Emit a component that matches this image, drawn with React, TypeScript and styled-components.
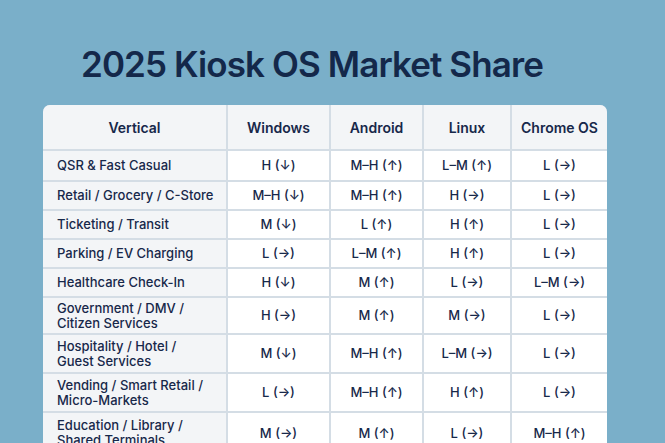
import React from "react";
import styled, { createGlobalStyle } from "styled-components";

const Global = createGlobalStyle`
  html, body { margin: 0; padding: 0; }
  body {
    background: #7aafc9;
    font-family: Inter, "Noto Sans", "Liberation Sans", sans-serif;
    width: 665px;
    height: 443px;
    overflow: hidden;
  }
`;

const Page = styled.div`
  display: flex;
  flex-direction: column;
  padding: 44px 0 0 43px;
`;

const Title = styled.h1`
  margin: 0 0 20px 38px;
  font-size: 35px;
  line-height: 41px;
  font-weight: 600;
  color: #14284a;
  letter-spacing: -0.9px;
`;

const Grid = styled.div`
  display: grid;
  width: 564px;
  grid-template-columns: 183px 101px 91px 86px 95px;
  grid-template-rows: 44px 29px 27px 27px 27px 27px 35px 37px 37px 40px;
  gap: 2px;
  background: #d4dde5;
  border-radius: 7px 7px 0 0;
  overflow: hidden;
`;

const Cell = styled.div<{ $head?: boolean; $label?: boolean }>`
  display: flex;
  align-items: center;
  justify-content: ${(p) => (p.$label && !p.$head ? "flex-start" : "center")};
  padding: ${(p) => (p.$label && !p.$head ? "0 0 0 14px" : "0")};
  background: ${(p) => (p.$head || p.$label ? "#f3f5f7" : "#ffffff")};
  color: #17284a;
  font-size: ${(p) => (p.$head ? "14px" : "13px")};
  font-weight: ${(p) => (p.$head ? 600 : 500)};
  line-height: 15px;
  text-align: ${(p) => (p.$label && !p.$head ? "left" : "center")};
  white-space: nowrap;
`;

const headers = ["Vertical", "Windows", "Android", "Linux", "Chrome OS"];

const rows: string[][] = [
  ["QSR & Fast Casual", "H (↓)", "M–H (↑)", "L–M (↑)", "L (→)"],
  ["Retail / Grocery / C-Store", "M–H (↓)", "M–H (↑)", "H (→)", "L (→)"],
  ["Ticketing / Transit", "M (↓)", "L (↑)", "H (↑)", "L (→)"],
  ["Parking / EV Charging", "L (→)", "L–M (↑)", "H (↑)", "L (→)"],
  ["Healthcare Check-In", "H (↓)", "M (↑)", "L (→)", "L–M (→)"],
  ["Government / DMV /\nCitizen Services", "H (→)", "M (↑)", "M (→)", "L (→)"],
  ["Hospitality / Hotel /\nGuest Services", "M (↓)", "M–H (↑)", "L–M (→)", "L (→)"],
  ["Vending / Smart Retail /\nMicro-Markets", "L (→)", "M–H (↑)", "H (↑)", "L (→)"],
  ["Education / Library /\nShared Terminals", "M (→)", "M (↑)", "L (→)", "M–H (↑)"],
];

const Label: React.FC<{ text: string }> = ({ text }) => {
  const parts = text.split("\n");
  return (
    <span>
      {parts.map((p, i) => (
        <React.Fragment key={i}>
          {i > 0 && <br />}
          {p}
        </React.Fragment>
      ))}
    </span>
  );
};

export default function App() {
  return (
    <>
      <Global />
      <Page>
        <Title>2025 Kiosk OS Market Share</Title>
        <Grid>
          {headers.map((h, i) => (
            <Cell key={h} $head $label={i === 0}>
              {h}
            </Cell>
          ))}
          {rows.map((r) =>
            r.map((c, i) => (
              <Cell key={r[0] + i} $label={i === 0}>
                {i === 0 ? <Label text={c} /> : c}
              </Cell>
            ))
          )}
        </Grid>
      </Page>
    </>
  );
}
